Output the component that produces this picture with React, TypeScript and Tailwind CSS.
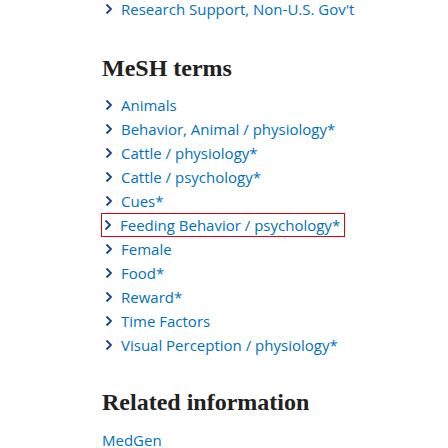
const meshTerms = [
  { id: 1, content: 'Animals' },
  { id: 2, content: 'Behavior, Animal / physiology*' },
  { id: 3, content: 'Cattle / physiology*' },
  { id: 4, content: 'Cattle / psychology*' },
  { id: 5, content: 'Cues*' },
  { id: 6, content: 'Feeding Behavior / psychology*', active: true },
  { id: 7, content: 'Female' },
  { id: 8, content: 'Food*' },
  { id: 9, content: 'Reward*' },
  { id: 10, content: 'Time Factors' },
  { id: 11, content: 'Visual Perception / physiology*' },
];

function Chevron() {
  return (
    <svg width="9" height="12" viewBox="0 0 9 12" className="shrink-0 text-[#1a4480]">
      <path d="M2.5 1.5 L7 6 L2.5 10.5" fill="none" stroke="currentColor" strokeWidth="1.8" />
    </svg>
  );
}

function Item({ text, active, short }: { text: string; active?: boolean; short?: boolean }) {
  const row = short ? 'h-[18px]' : 'h-6';
  return (
    <li
      className={
        active
          ? `flex ${row} w-fit items-center gap-[8px] border border-[#e0000f] pl-[1px] pr-[4px] -ml-[1px]`
          : `flex ${row} items-center gap-[8px] pl-[2px]`
      }
    >
      <Chevron />
      <span className={`text-[#0071bc] text-[15px] font-normal ${short ? 'leading-[18px]' : 'leading-6'}`}>{text}</span>
    </li>
  );
}

export default function App() {
  return (
    <div className="w-[448px] h-[448px] overflow-hidden bg-white pl-[102px] font-['Open_Sans',sans-serif]">
      <ul>
        <Item text="Research Support, Non-U.S. Gov't" short />
      </ul>
      <h2 className="mt-[36px] font-['Liberation_Serif',serif] font-bold text-[24px] leading-[28px] text-[#212121]">
        MeSH terms
      </h2>
      <ul className="mt-[11px] flex flex-col">
        {meshTerms.map((el) => (
          <Item key={el.id} text={el.content} active={el.active} />
        ))}
      </ul>
      <h2 className="mt-[31px] font-['Liberation_Serif',serif] font-bold text-[24px] leading-[28px] text-[#212121]">
        Related information
      </h2>
      <div className="mt-[15px] h-[18px] leading-[18px] text-[15px] text-[#0071bc]">MedGen</div>
    </div>
  );
}
